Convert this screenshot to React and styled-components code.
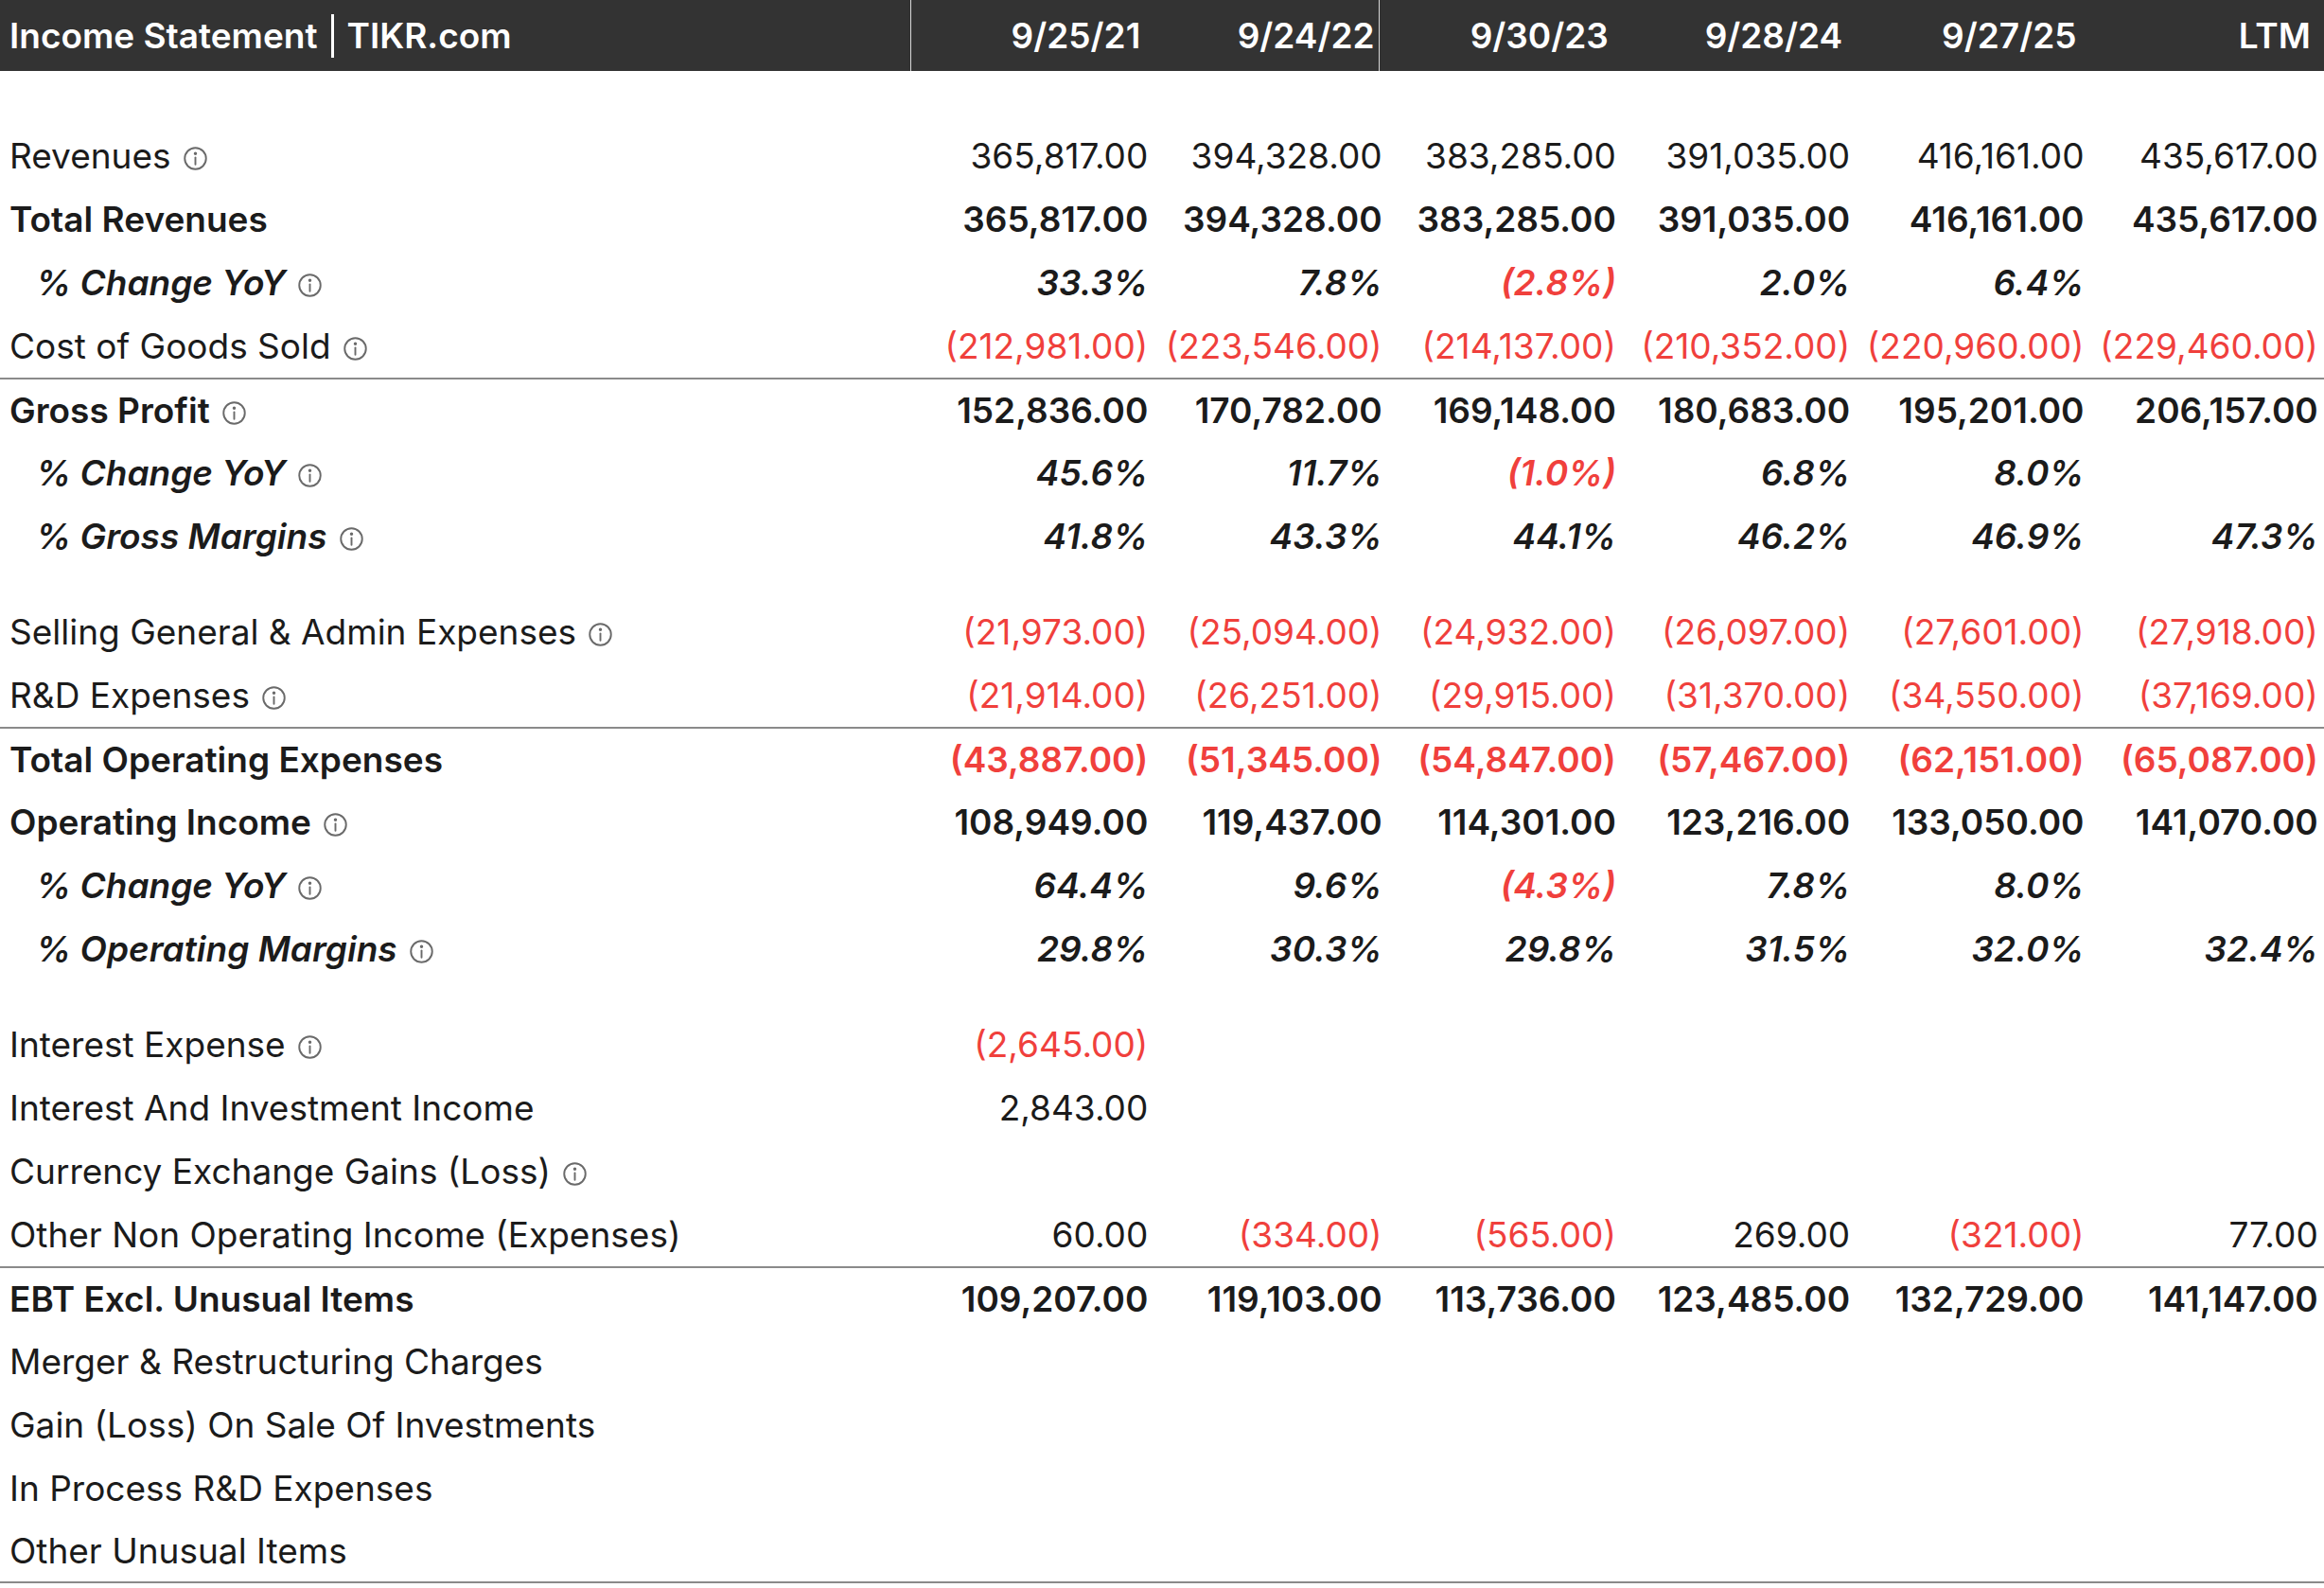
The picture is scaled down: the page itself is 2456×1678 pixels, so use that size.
import React from "react";
import styled, { createGlobalStyle, css } from "styled-components";

const Global = createGlobalStyle`
  html, body { margin: 0; padding: 0; background: #fff; }
  body { font-family: Inter, "Noto Sans", sans-serif; color: #1b1b1b; }
`;

const COLS = "962px repeat(6, 247.3px)";

const Table = styled.div`
  width: 2456px;
  display: flex;
  flex-direction: column;
`;

const Header = styled.div`
  display: grid;
  grid-template-columns: ${COLS};
  height: 75px;
  background: #333333;
  color: #fff;
  font-size: 37px;
  font-weight: 600;
`;

const HeadTitle = styled.div`
  display: flex;
  align-items: center;
  padding-left: 10px;
  gap: 14px;
`;

const Bar = styled.span`
  display: inline-block;
  width: 3px;
  height: 46px;
  background: #fff;
`;

const HeadCell = styled.div`
  display: flex;
  align-items: center;
  justify-content: flex-end;
  padding-right: 4px;
  ${(p) => p.$divider && css`border-left: 1.5px solid #d8d8d8;`}
`;

const Spacer = styled.div`
  height: ${(p) => p.$h}px;
`;

const Row = styled.div`
  display: grid;
  grid-template-columns: ${COLS};
  height: 67px;
  align-items: center;
  font-size: 37px;
  font-weight: ${(p) => (p.$bold || p.$pct ? 600 : 400)};
  font-style: ${(p) => (p.$pct ? "italic" : "normal")};
  box-sizing: border-box;
  ${(p) => p.$line && css`border-top: 2px solid #8a8a8a;`}
  ${(p) => p.$bottom && css`border-bottom: 2px solid #8a8a8a;`}
`;

const Label = styled.div`
  display: flex;
  align-items: center;
  gap: 12px;
  padding-left: ${(p) => (p.$indent ? 38 : 10)}px;
  white-space: nowrap;
`;

const Cell = styled.div`
  text-align: right;
  padding-right: 0;
  margin-right: -4px;
  white-space: nowrap;
  color: ${(p) => (p.$neg ? "#f0403c" : "#1b1b1b")};
`;

const InfoWrap = styled.span`
  display: inline-flex;
  margin-top: 5px;
`;

const Info = () => (
  <InfoWrap>
    <svg width="27" height="27" viewBox="0 0 24 24" fill="none" stroke="#6a6a6a" strokeWidth="1.7">
      <circle cx="12" cy="12" r="10" />
      <line x1="12" y1="11" x2="12" y2="17.5" strokeLinecap="round" />
      <circle cx="12" cy="7.3" r="0.7" fill="#6a6a6a" />
    </svg>
  </InfoWrap>
);

const rows = [
  { spacer: 56 },
  { l: "Revenues", i: 1, v: ["365,817.00", "394,328.00", "383,285.00", "391,035.00", "416,161.00", "435,617.00"] },
  { l: "Total Revenues", b: 1, v: ["365,817.00", "394,328.00", "383,285.00", "391,035.00", "416,161.00", "435,617.00"] },
  { l: "% Change YoY", p: 1, i: 1, v: ["33.3%", "7.8%", "(2.8%)", "2.0%", "6.4%", ""] },
  { l: "Cost of Goods Sold", i: 1, v: ["(212,981.00)", "(223,546.00)", "(214,137.00)", "(210,352.00)", "(220,960.00)", "(229,460.00)"] },
  { l: "Gross Profit", b: 1, i: 1, line: 1, v: ["152,836.00", "170,782.00", "169,148.00", "180,683.00", "195,201.00", "206,157.00"] },
  { l: "% Change YoY", p: 1, i: 1, v: ["45.6%", "11.7%", "(1.0%)", "6.8%", "8.0%", ""] },
  { l: "% Gross Margins", p: 1, i: 1, v: ["41.8%", "43.3%", "44.1%", "46.2%", "46.9%", "47.3%"] },
  { spacer: 34 },
  { l: "Selling General & Admin Expenses", i: 1, v: ["(21,973.00)", "(25,094.00)", "(24,932.00)", "(26,097.00)", "(27,601.00)", "(27,918.00)"] },
  { l: "R&D Expenses", i: 1, v: ["(21,914.00)", "(26,251.00)", "(29,915.00)", "(31,370.00)", "(34,550.00)", "(37,169.00)"] },
  { l: "Total Operating Expenses", b: 1, line: 1, v: ["(43,887.00)", "(51,345.00)", "(54,847.00)", "(57,467.00)", "(62,151.00)", "(65,087.00)"] },
  { l: "Operating Income", b: 1, i: 1, v: ["108,949.00", "119,437.00", "114,301.00", "123,216.00", "133,050.00", "141,070.00"] },
  { l: "% Change YoY", p: 1, i: 1, v: ["64.4%", "9.6%", "(4.3%)", "7.8%", "8.0%", ""] },
  { l: "% Operating Margins", p: 1, i: 1, v: ["29.8%", "30.3%", "29.8%", "31.5%", "32.0%", "32.4%"] },
  { spacer: 34 },
  { l: "Interest Expense", i: 1, v: ["(2,645.00)", "", "", "", "", ""] },
  { l: "Interest And Investment Income", v: ["2,843.00", "", "", "", "", ""] },
  { l: "Currency Exchange Gains (Loss)", i: 1, v: ["", "", "", "", "", ""] },
  { l: "Other Non Operating Income (Expenses)", v: ["60.00", "(334.00)", "(565.00)", "269.00", "(321.00)", "77.00"] },
  { l: "EBT Excl. Unusual Items", b: 1, line: 1, v: ["109,207.00", "119,103.00", "113,736.00", "123,485.00", "132,729.00", "141,147.00"] },
  { l: "Merger & Restructuring Charges", v: ["", "", "", "", "", ""] },
  { l: "Gain (Loss) On Sale Of Investments", v: ["", "", "", "", "", ""] },
  { l: "In Process R&D Expenses", v: ["", "", "", "", "", ""] },
  { l: "Other Unusual Items", bottom: 1, v: ["", "", "", "", "", ""] },
];

const heads = ["9/25/21", "9/24/22", "9/30/23", "9/28/24", "9/27/25", "LTM"];

export default function App() {
  return (
    <>
      <Global />
      <Table>
        <Header>
          <HeadTitle>
            Income Statement <Bar /> TIKR.com
          </HeadTitle>
          {heads.map((h, k) => (
            <HeadCell key={h} $divider={k === 0 || k === 2}>{h}</HeadCell>
          ))}
        </Header>
        {rows.map((r, k) =>
          r.spacer ? (
            <Spacer key={k} $h={r.spacer} />
          ) : (
            <Row key={k} $bold={r.b} $pct={r.p} $line={r.line} $bottom={r.bottom}>
              <Label $indent={r.p}>
                {r.l}
                {r.i ? <Info /> : null}
              </Label>
              {r.v.map((v, j) => (
                <Cell key={j} $neg={v.startsWith("(")}>{v}</Cell>
              ))}
            </Row>
          )
        )}
      </Table>
    </>
  );
}
